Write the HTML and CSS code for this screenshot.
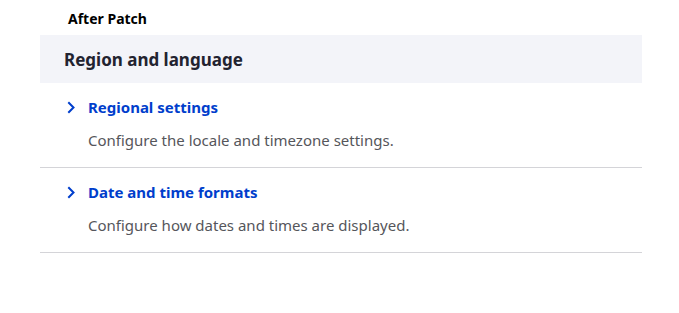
FILE: index.html
```html
<!DOCTYPE html>
<html lang="en">
  <head>
    <meta charset="utf-8">
    <title>Region and language</title>
    <link rel="stylesheet" href="styles.css">
  </head>
  <body>
    <h4 class="caption">After Patch</h4>

    <div class="panel">
      <h2 class="panel-title">Region and language</h2>

      <dl class="admin-list">
        <div class="admin-item">
          <dt class="admin-item-title">
            <a href="#" class="admin-item-link">
              <svg class="chevron" width="8" height="13" viewBox="0 0 8 13" aria-hidden="true">
                <path d="M1.3 1.3 6.5 6.5 1.3 11.7" fill="none" stroke="#003ecc" stroke-width="2"/>
              </svg>
              Regional settings
            </a>
          </dt>
          <dd class="admin-item-description">Configure the locale and timezone settings.</dd>
        </div>

        <div class="admin-item">
          <dt class="admin-item-title">
            <a href="#" class="admin-item-link">
              <svg class="chevron" width="8" height="13" viewBox="0 0 8 13" aria-hidden="true">
                <path d="M1.3 1.3 6.5 6.5 1.3 11.7" fill="none" stroke="#003ecc" stroke-width="2"/>
              </svg>
              Date and time formats
            </a>
          </dt>
          <dd class="admin-item-description">Configure how dates and times are displayed.</dd>
        </div>
      </dl>
    </div>
  </body>
</html>
```

FILE: styles.css
```css
* {
  margin: 0;
  padding: 0;
  box-sizing: border-box;
}

body {
  font-family: "Noto Sans", "Open Sans", sans-serif;
  color: #222330;
  background: #fff;
  width: 679px;
}

.caption {
  font-size: 14px;
  font-weight: 700;
  line-height: 18px;
  color: #000;
  padding: 10px 0 7px 68px;
}

.panel {
  width: 602px;
  margin-left: 40px;
}

.panel-title {
  background: #f3f4f9;
  font-size: 17px;
  font-weight: 700;
  line-height: 24px;
  padding: 13px 24px 11px;
  color: #222330;
}

.admin-item {
  border-bottom: 1px solid #d4d4d8;
  padding: 12px 0 15px 0;
}

.admin-item-title {
  line-height: 24px;
}

.admin-item-link {
  display: flex;
  align-items: center;
  gap: 13px;
  padding-left: 27px;
  font-size: 15px;
  font-weight: 700;
  color: #003ecc;
  text-decoration: none;
}

.chevron {
  flex: none;
}

.admin-item-description {
  font-size: 15px;
  line-height: 24px;
  color: #55565b;
  padding: 9px 0 0 48px;
}
```
